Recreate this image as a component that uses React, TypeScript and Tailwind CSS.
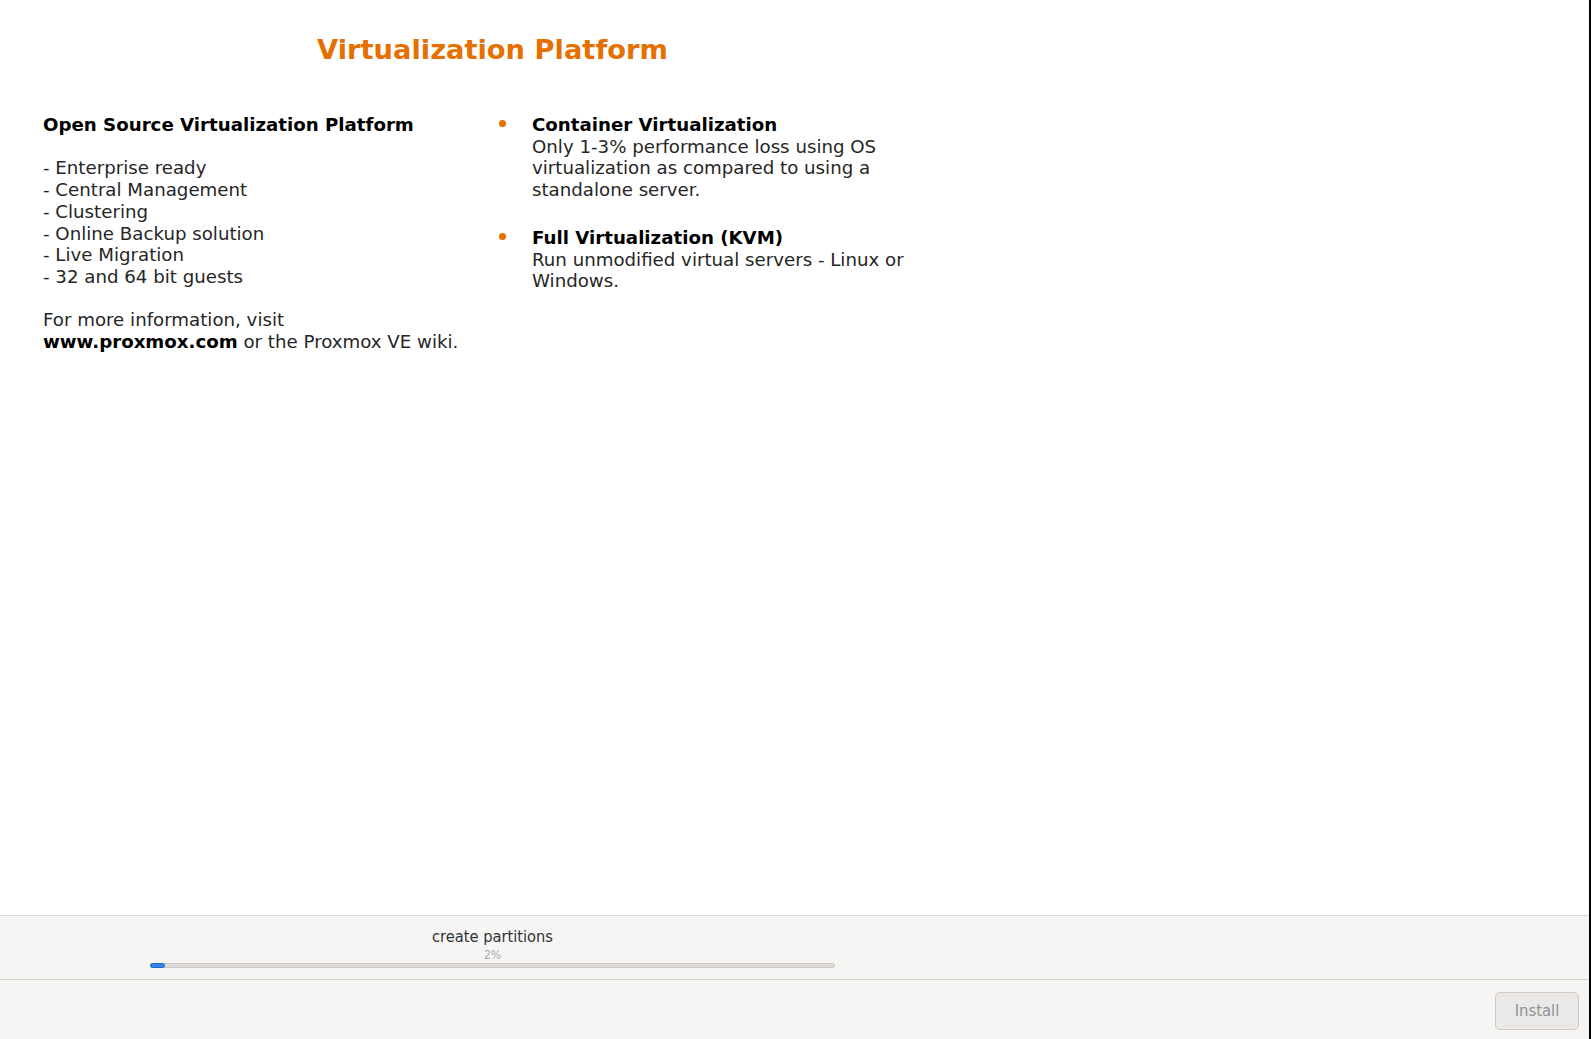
import React from "react";

const body = { fontFamily: '"DejaVu Sans", "Liberation Sans", sans-serif' };
const cond = { fontFamily: '"DejaVu Sans Condensed", Roboto, "Liberation Sans", sans-serif', fontStretch: "condensed" as const };

function Bullet({ title, lines }: { title: string; lines: string[] }) {
  return (
    <div className="flex">
      <div className="w-[39px] shrink-0 pl-[6px]">
        <div className="mt-[6px] h-[7px] w-[7px] rounded-full bg-[#e57000]" />
      </div>
      <div className="whitespace-nowrap text-[18.2px] leading-[21.7px]">
        <div className="font-bold text-black">{title}</div>
        {lines.map((l) => (
          <div key={l} className="text-[#262626]">
            {l}
          </div>
        ))}
      </div>
    </div>
  );
}

export default function App() {
  return (
    <div className="flex h-[1039px] w-full bg-white" style={body}>
      <div className="flex flex-1 flex-col">
        <div className="flex-1 bg-white">
          <div className="w-[985px]">
            <div className="pt-[33px] text-center text-[27.3px] font-bold leading-[34px] text-[#e57000]">
              Virtualization Platform
            </div>
            <div className="mt-[47px] flex">
              <div className="w-[456px] shrink-0 whitespace-nowrap pl-[43px] text-[18.2px] leading-[21.7px] text-[#262626]">
                <div className="font-bold text-black">Open Source Virtualization Platform</div>
                <div className="mt-[21.7px]">
                  <div>- Enterprise ready</div>
                  <div>- Central Management</div>
                  <div>- Clustering</div>
                  <div>- Online Backup solution</div>
                  <div>- Live Migration</div>
                  <div>- 32 and 64 bit guests</div>
                </div>
                <div className="mt-[21.7px]">
                  <div>For more information, visit</div>
                  <div>
                    <span className="font-bold text-black">www.proxmox.com</span> or the Proxmox VE wiki.
                  </div>
                </div>
              </div>
              <div className="ml-[37px] flex flex-col gap-[26px]">
                <Bullet
                  title="Container Virtualization"
                  lines={[
                    "Only 1-3% performance loss using OS",
                    "virtualization as compared to using a",
                    "standalone server.",
                  ]}
                />
                <Bullet
                  title="Full Virtualization (KVM)"
                  lines={["Run unmodified virtual servers - Linux or", "Windows."]}
                />
              </div>
            </div>
          </div>
        </div>
        <div className="h-[64px] border-t border-[#d9d6d2] bg-[#f6f5f4]">
          <div className="flex w-[985px] flex-col items-center pt-[11px]">
            <div className="text-[16.3px] leading-[19px] text-[#2e3436]" style={cond}>
              create partitions
            </div>
            <div className="mt-[2px] text-[12px] leading-[14px] text-[#a9a9a9]" style={cond}>
              2%
            </div>
            <div className="mt-[1px] ml-[150px] h-[5px] w-[685px] self-start rounded-full border border-[#cdc8c3] bg-[#dedad6]">
              <div className="-mt-px -ml-px h-[5px] w-[15px] rounded-full border border-[#1b6acb] bg-[#3584e4]" />
            </div>
          </div>
        </div>
        <div className="flex h-[60px] items-start justify-end border-t border-[#d9d6d2] bg-[#f6f5f4] pr-[10px] pt-[12px]">
          <div
            className="flex h-[38px] w-[84px] items-center justify-center rounded-[5px] border border-[#cfcac5] bg-[#ebe9e7] text-[16.5px] text-[#8f9193]"
            style={cond}
          >
            Install
          </div>
        </div>
      </div>
      <div className="w-[2px] shrink-0 bg-black" />
    </div>
  );
}
